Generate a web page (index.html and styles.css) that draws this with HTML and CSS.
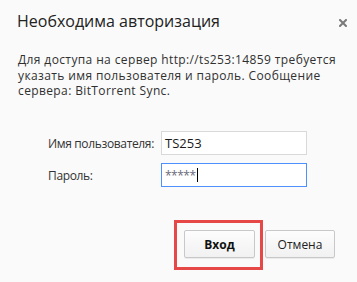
FILE: index.html
```html
<!DOCTYPE html>
<html lang="ru">
<head>
<meta charset="utf-8">
<link rel="stylesheet" href="styles.css">
</head>
<body>
<div class="dialog">
  <div class="header">
    <h1 class="title">Необходима авторизация</h1>
    <span class="close"><svg width="8" height="8" viewBox="0 0 8 8"><path d="M1 1L7 7M7 1L1 7" stroke="#7a7a7a" stroke-width="2" stroke-linecap="square"/></svg></span>
  </div>
  <p class="message">Для доступа на сервер http://ts253:14859 требуется указать имя пользователя и пароль. Сообщение сервера: BitTorrent Sync.</p>
  <div class="form">
    <span class="label">Имя пользователя:</span>
    <span class="field">TS253</span>
    <span class="label">Пароль:</span>
    <span class="field focused"><span class="stars">*****</span><span class="caret"></span></span>
  </div>
  <div class="actions">
    <span class="highlighted">
      <button class="btn primary">Вход</button>
      <span class="highlight"></span>
    </span>
    <button class="btn">Отмена</button>
  </div>
</div>
</body>
</html>
```
FILE: styles.css
```css
html, body {
  margin: 0;
  padding: 0;
  background: #fafafa;
}
.dialog {
  width: 357px;
  height: 282px;
  box-sizing: border-box;
  font-family: "Open Sans", "Noto Sans", sans-serif;
  color: #303030;
  font-size: 12px;
}
.header {
  display: flex;
  justify-content: space-between;
  align-items: flex-start;
  padding: 11px 10px 0 17px;
}
.title {
  margin: 0;
  font-size: 16px;
  font-weight: normal;
  line-height: 20px;
  color: #222;
}
.close {
  display: flex;
  margin-top: -2px;
}
.close svg {
  display: block;
  margin: 10px 0 0 0;
  width: 8px;
  height: 8px;
}
.message {
  margin: 21px 12px 0 18px;
  line-height: 15.5px;
  height: 47px;
  letter-spacing: 0.38px;
}
.form {
  display: grid;
  grid-template-columns: 113px 146px;
  grid-auto-rows: 24px;
  row-gap: 8px;
  align-items: center;
  margin: 32px 0 0 48px;
}
.label {
  letter-spacing: -0.35px;
  color: #333;
}
.field {
  display: flex;
  align-items: center;
  height: 24px;
  box-sizing: border-box;
  border: 1px solid #d9d9d9;
  background: #fff;
  padding: 0 3px;
  font-size: 13px;
  color: #1a1a1a;
}
.field.focused {
  border-color: #4d90fe;
}
.stars {
  color: #6a6a7a;
  font-size: 12px;
  letter-spacing: -0.5px;
}
.caret {
  width: 1px;
  height: 14px;
  background: #000;
  margin-left: 1px;
}
.actions {
  display: flex;
  justify-content: flex-end;
  gap: 10px;
  margin: 43px 22px 0 0;
}
.highlighted {
  position: relative;
  display: flex;
}
.highlight {
  position: absolute;
  top: -10px;
  left: -10px;
  right: -8px;
  bottom: -12px;
  border: 3px solid #e64848;
}
.btn {
  height: 28px;
  width: 70px;
  box-sizing: border-box;
  border: 1px solid #c8c8c8;
  border-radius: 2px;
  background: linear-gradient(#fdfdfd, #f1f1f1);
  box-shadow: 0 1px 0 rgba(0,0,0,0.06);
  font-family: "Open Sans", "Noto Sans", sans-serif;
  font-size: 12px;
  color: #222;
  padding: 0;
}
.btn.primary {
  width: 71px;
  font-weight: bold;
  color: #111;
}
```
